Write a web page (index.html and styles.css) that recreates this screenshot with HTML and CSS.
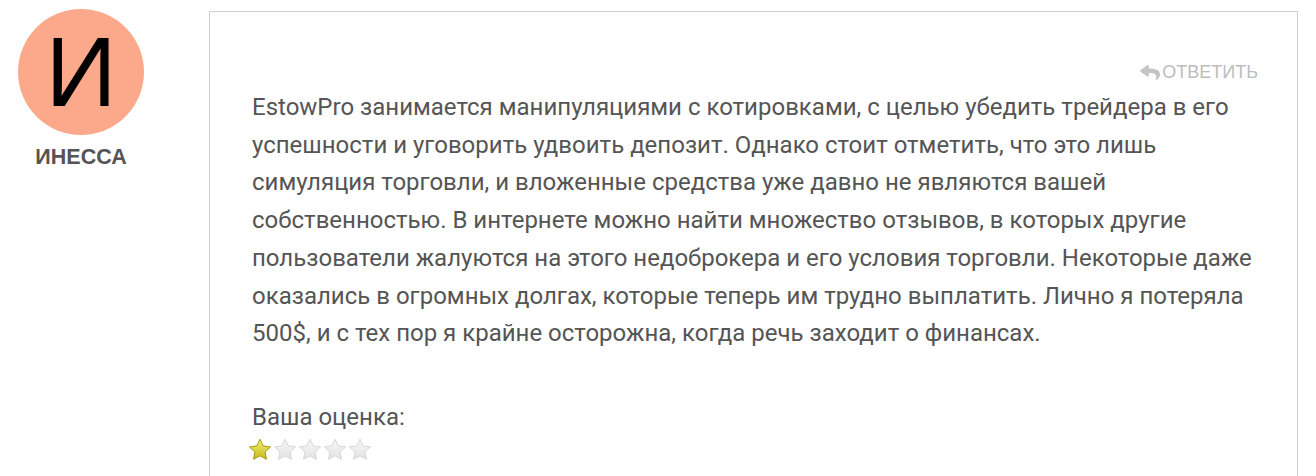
FILE: index.html
```html
<!DOCTYPE html>
<html lang="ru">
<head>
<meta charset="utf-8">
<title>Отзыв</title>
<link rel="stylesheet" href="styles.css">
</head>
<body>
<svg class="defs" aria-hidden="true">
  <defs>
    <linearGradient id="gy" x1="0" y1="0" x2="0" y2="1"><stop offset="0" stop-color="#f6f07a"/><stop offset="1" stop-color="#c4b919"/></linearGradient>
    <linearGradient id="gg" x1="0" y1="0" x2="0" y2="1"><stop offset="0" stop-color="#f7f7f7"/><stop offset="1" stop-color="#e2e2e2"/></linearGradient>
  </defs>
</svg>
<div class="comment">
  <div class="author">
    <div class="avatar">И</div>
    <div class="name">ИНЕССА</div>
  </div>
  <div class="card">
    <div class="reply-row">
      <a class="reply" href="#">
        <svg class="reply-icon" viewBox="0 30 512 455" preserveAspectRatio="none" aria-hidden="true"><path d="M8.309 189.836L184.313 37.851C199.719 24.546 224 35.347 224 56.015v80.053c160.629 1.839 288 34.032 288 186.258 0 61.441-39.581 122.309-83.333 154.132-13.653 9.931-33.111-2.533-28.077-18.631 45.344-145.012-21.507-183.51-176.59-185.742V360c0 20.7-24.3 31.453-39.687 18.164l-176.004-152c-11.071-9.562-11.086-26.753 0-36.328z"/></svg>ОТВЕТИТЬ
      </a>
    </div>
    <p class="text">EstowPro занимается манипуляциями с котировками, с целью убедить трейдера в его успешности и уговорить удвоить депозит. Однако стоит отметить, что это лишь симуляция торговли, и вложенные средства уже давно не являются вашей собственностью. В интернете можно найти множество отзывов, в которых другие пользователи жалуются на этого недоброкера и его условия торговли. Некоторые даже оказались в огромных долгах, которые теперь им трудно выплатить. Лично я потеряла 500$, и с тех пор я крайне осторожна, когда речь заходит о финансах.</p>
    <div class="rating-label">Ваша оценка:</div>
    <div class="stars">
      <svg class="star" viewBox="0 0 24 24"><path d="M12 1.2l3.2 6.7 7.3 1-5.4 5.1 1.4 7.3L12 17.8l-6.5 3.5 1.4-7.3-5.4-5.1 7.3-1z" fill="url(#gy)" stroke="#a99c12" stroke-width="1"/></svg>
      <svg class="star" viewBox="0 0 24 24"><path d="M12 1.2l3.2 6.7 7.3 1-5.4 5.1 1.4 7.3L12 17.8l-6.5 3.5 1.4-7.3-5.4-5.1 7.3-1z" fill="url(#gg)" stroke="#d6d6d6" stroke-width="1"/></svg>
      <svg class="star" viewBox="0 0 24 24"><path d="M12 1.2l3.2 6.7 7.3 1-5.4 5.1 1.4 7.3L12 17.8l-6.5 3.5 1.4-7.3-5.4-5.1 7.3-1z" fill="url(#gg)" stroke="#d6d6d6" stroke-width="1"/></svg>
      <svg class="star" viewBox="0 0 24 24"><path d="M12 1.2l3.2 6.7 7.3 1-5.4 5.1 1.4 7.3L12 17.8l-6.5 3.5 1.4-7.3-5.4-5.1 7.3-1z" fill="url(#gg)" stroke="#d6d6d6" stroke-width="1"/></svg>
      <svg class="star" viewBox="0 0 24 24"><path d="M12 1.2l3.2 6.7 7.3 1-5.4 5.1 1.4 7.3L12 17.8l-6.5 3.5 1.4-7.3-5.4-5.1 7.3-1z" fill="url(#gg)" stroke="#d6d6d6" stroke-width="1"/></svg>
    </div>
  </div>
</div>
</body>
</html>
```

FILE: styles.css
```css
* { box-sizing: border-box; }
html, body {
  margin: 0;
  padding: 0;
  background: #fff;
  overflow: hidden;
}
body {
  font-family: Roboto, "Liberation Sans", sans-serif;
  color: #555;
}
.defs {
  width: 0;
  height: 0;
  display: block;
  overflow: hidden;
}
.comment {
  display: flex;
  align-items: flex-start;
  padding: 9px 0 0 18px;
  gap: 65px;
}
.author {
  width: 126px;
  flex: none;
  display: flex;
  flex-direction: column;
  align-items: center;
}
.avatar {
  width: 126px;
  height: 126px;
  border-radius: 50%;
  background: #fba98a;
  color: #000;
  font-family: "Liberation Sans", Arial, sans-serif;
  font-size: 99px;
  line-height: 126px;
  text-align: center;
}
.name {
  margin-top: 10px;
  font-family: "Liberation Sans", Arial, sans-serif;
  font-weight: bold;
  font-size: 21.5px;
  line-height: 24px;
  color: #555;
}
.card {
  width: 1089px;
  flex: none;
  margin-top: 2px;
  border: 1px solid #cfcfcf;
  padding: 48px 39px 40px 42px;
  min-height: 600px;
}
.reply-row {
  display: flex;
  justify-content: flex-end;
  height: 24px;
}
.reply {
  display: flex;
  align-items: center;
  color: #bdbdbd;
  text-decoration: none;
  font-family: "Liberation Sans", Arial, sans-serif;
  font-size: 18px;
  line-height: 24px;
}
.reply-icon {
  width: 20px;
  height: 15px;
  fill: #c4c4c4;
  margin-right: 2px;
}
.text {
  margin: 5px 0 0;
  font-size: 24px;
  line-height: 37.7px;
}
.rating-label {
  margin-top: 51px;
  font-size: 24px;
  line-height: 26px;
}
.stars {
  display: flex;
  gap: 1px;
  margin-top: 8px;
  margin-left: -4px;
}
.star {
  width: 24px;
  height: 24px;
}
```
